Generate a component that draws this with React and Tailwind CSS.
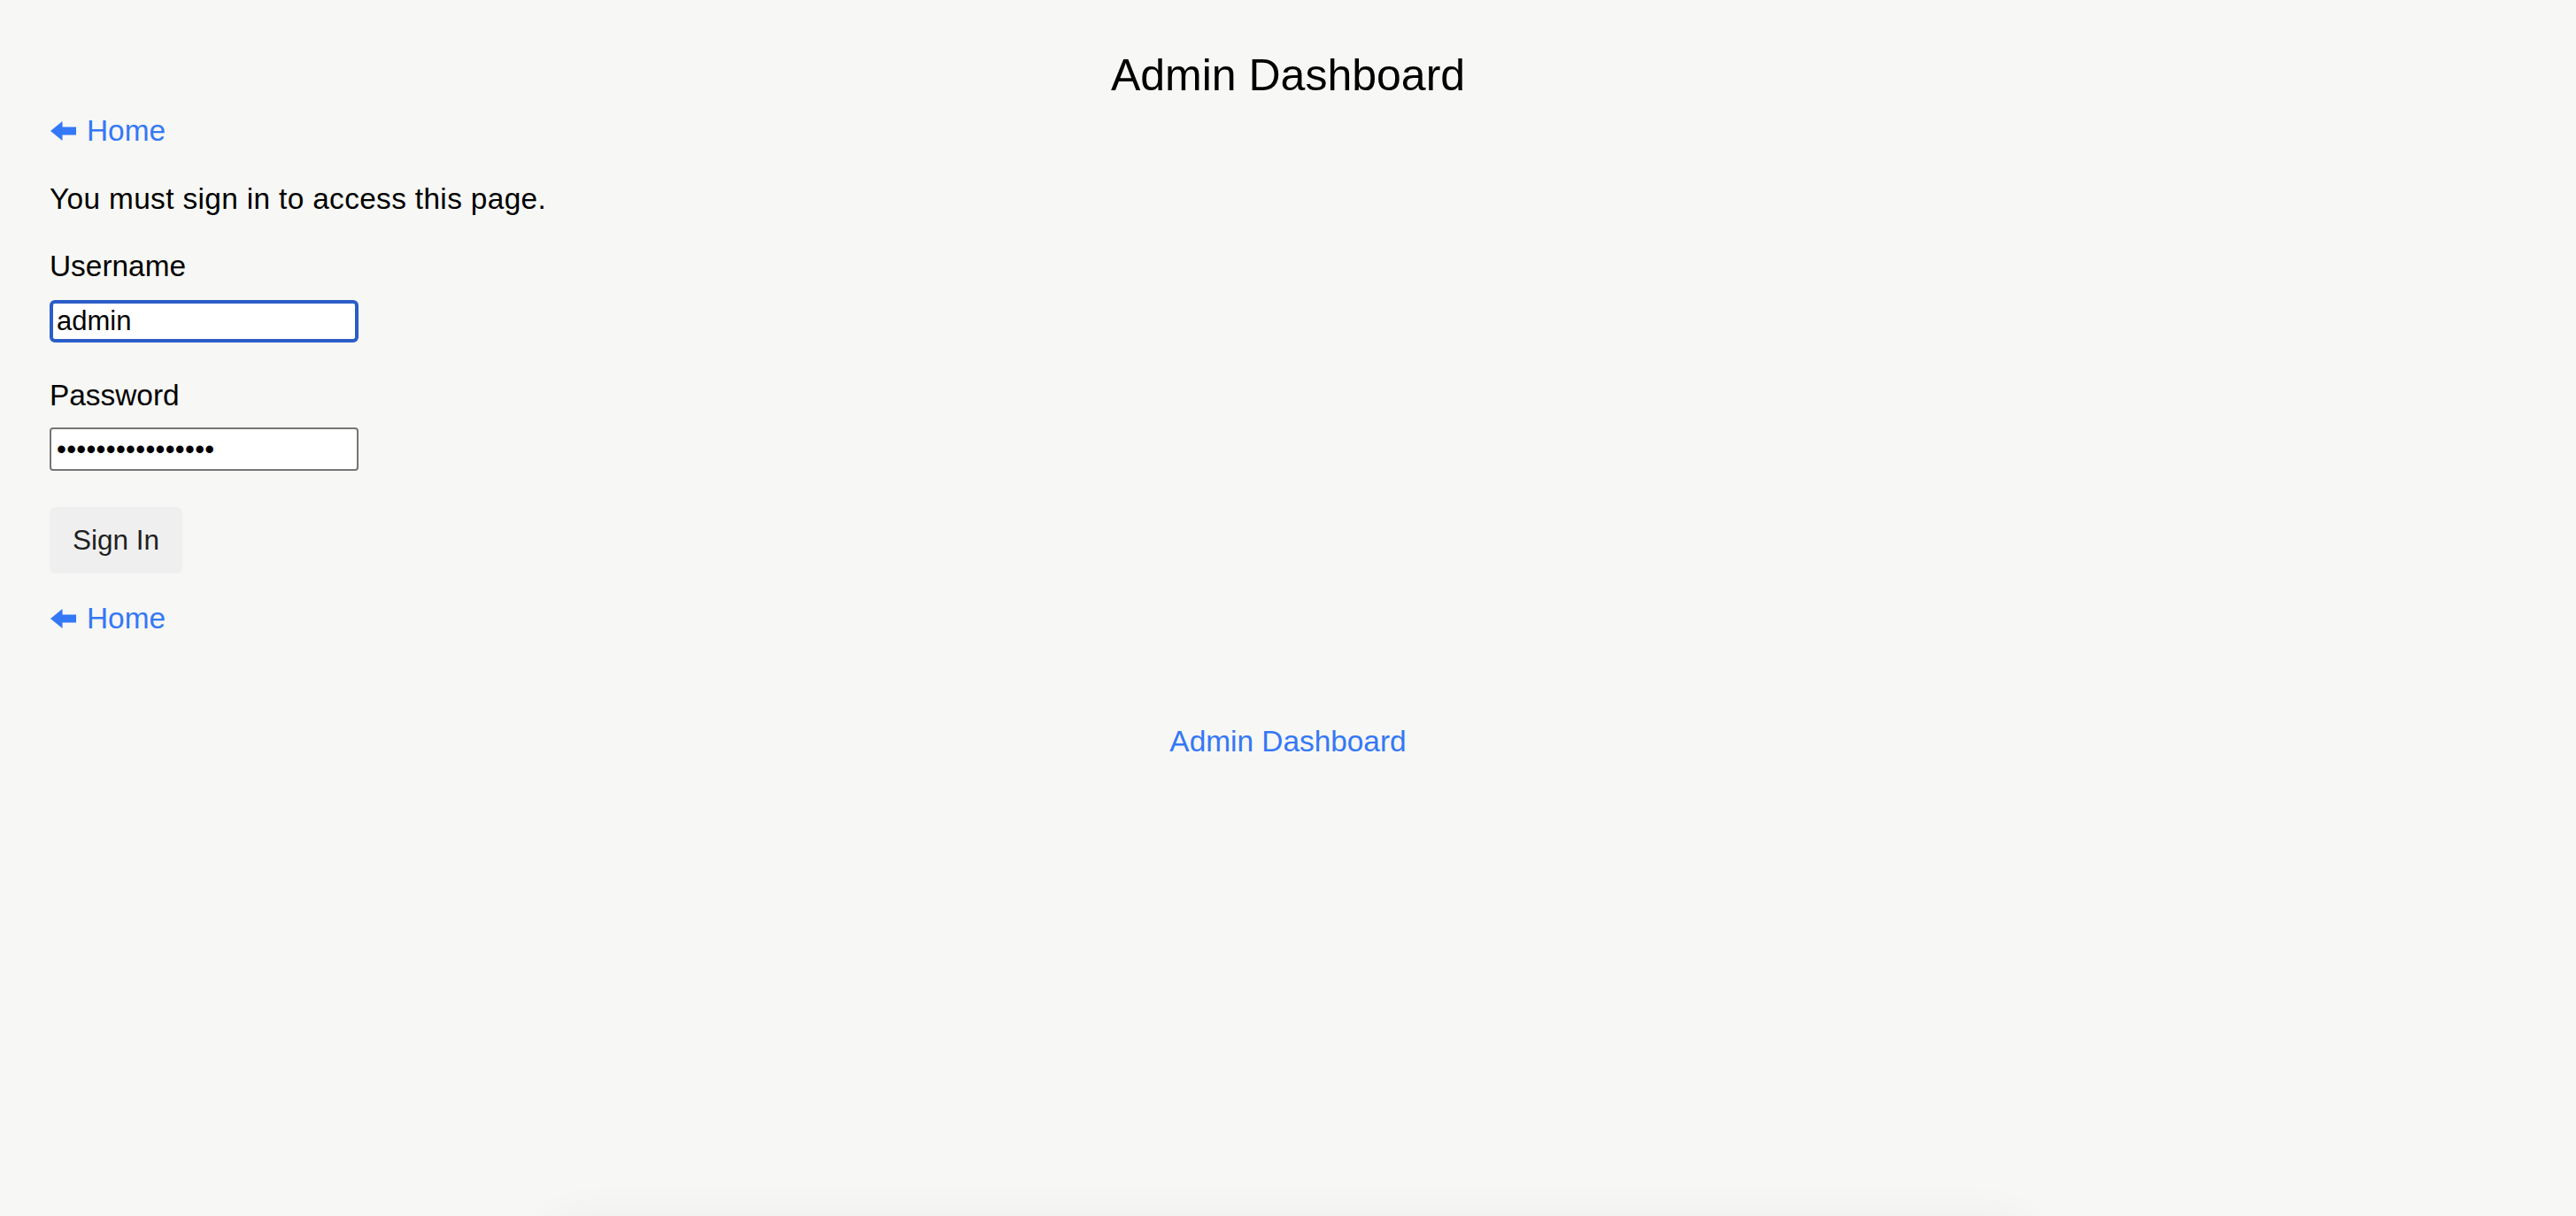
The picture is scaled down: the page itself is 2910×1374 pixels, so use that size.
import React from 'react';

function BackArrow() {
  return (
    <svg width="29" height="22" viewBox="0 0 29 22" className="shrink-0">
      <polygon points="0,11 13.5,0 13.5,6.5 29,6.5 29,15.5 13.5,15.5 13.5,22" fill="currentColor" />
    </svg>
  );
}

function HomeLink({ className = '' }) {
  return (
    <a href="#" className={`flex w-fit items-center pl-px text-[33.4px] leading-[40px] text-[#3478f6] ${className}`}>
      <BackArrow />
      <span className="ml-[12px]">Home</span>
    </a>
  );
}

export default function App() {
  return (
    <div className="min-h-screen overflow-hidden bg-[#f7f7f5] px-[56px] pt-[55px] font-['Liberation_Sans',Arial,sans-serif] text-black">
      <h1 className="text-center text-[50px] font-normal leading-[60px]">Admin Dashboard</h1>

      <HomeLink className="mt-[13px]" />

      <p className="mt-[37px] text-[33.4px] leading-[40px] tracking-[0.35px]">You must sign in to access this page.</p>

      <form onSubmit={(e) => e.preventDefault()}>
        <label className="mt-[36px] block text-[33.4px] leading-[40px]">Username</label>
        <input
          type="text"
          defaultValue="admin"
          className="mt-[18px] block h-[48px] w-[349px] rounded-[6px] border-4 border-[#2a5dc8] bg-white pl-[4px] text-[31px] text-black outline-none"
        />

        <label className="mt-[40px] block text-[33.4px] leading-[40px]">Password</label>
        <input
          type="password"
          defaultValue="adminpassword123"
          className="mt-[16px] block h-[49px] w-[349px] rounded-[4px] border-2 border-[#767676] bg-white pl-[6px] text-[31px] tracking-[0.3px] text-black outline-none"
        />

        <button
          type="submit"
          className="mt-[41px] block h-[75px] rounded-[7px] bg-[#efefef] px-[26px] text-[31.5px] text-[#1f1f1f]"
        >
          Sign In
        </button>
      </form>

      <HomeLink className="mt-[31px]" />

      <div className="mt-[99px] text-center text-[33.4px] leading-[40px]">
        <a href="#" className="text-[#3478f6]">Admin Dashboard</a>
      </div>

      <div className="mx-auto mt-[530px] h-[200px] w-[1660px] rounded-[20px] bg-[#f6f6f4] shadow-[0_0_60px_rgba(0,0,0,0.07)]" />
    </div>
  );
}
